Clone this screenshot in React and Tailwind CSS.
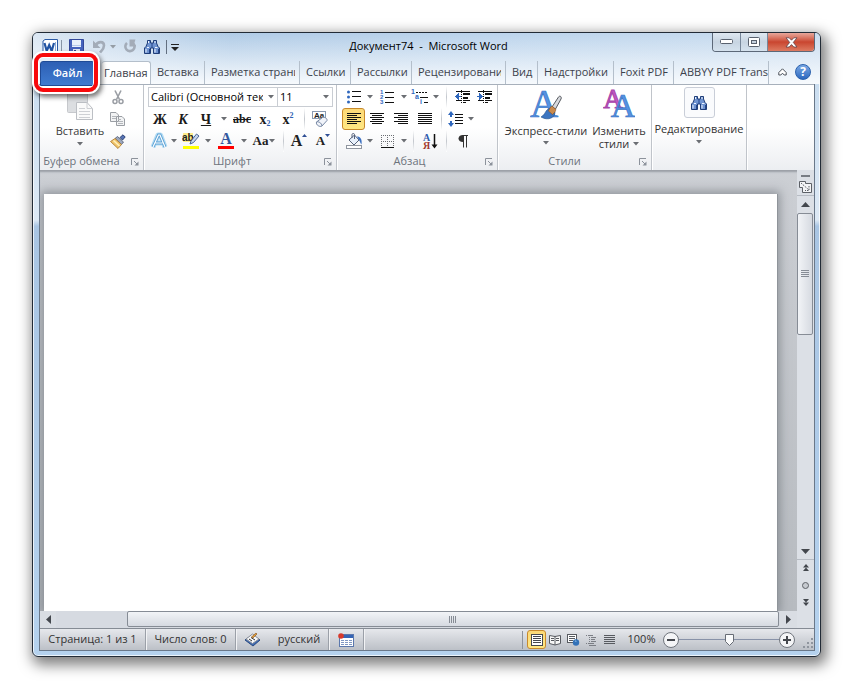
import { useState } from "react"

const tabs = [
  { name: "Главная", width: "w-[49px]" },
  { name: "Вставка", width: "w-[54px] pr-[2px]" },
  { name: "Разметка страни", width: "w-[95px] pr-[4px]" },
  { name: "Ссылки", width: "w-[51px] pr-[2px]" },
  { name: "Рассылки", width: "w-[61px] pr-[2px]" },
  { name: "Рецензировани", width: "w-[94px] pr-[4px]" },
  { name: "Вид", width: "w-[32px] pr-[2px]" },
  { name: "Надстройки", width: "w-[76px] pr-[2px]" },
  { name: "Foxit PDF", width: "w-[60px] pr-[2px]" },
  { name: "ABBYY PDF Trans", width: "w-[95px]" },
]

function Arrow({ className = "" }) {
  return (
    <svg width="6" height="4" viewBox="0 0 6 4" className={`shrink-0 ${className}`}>
      <path d="M0 0H6L3 3.5Z" fill="#6b6e73" />
    </svg>
  )
}

// Small button in the ribbon rows
function Tool({ label, className = "w-6", children }) {
  return (
    <button aria-label={label} className={`flex h-[22px] shrink-0 items-center justify-center ${className}`}>
      {children}
    </button>
  )
}

function Drop({ label }) {
  return (
    <Tool label={label} className="w-2">
      <Arrow />
    </Tool>
  )
}

function Sep({ className = "w-2" }) {
  return (
    <span className={`flex h-[22px] shrink-0 justify-center ${className}`}>
      <span className="w-px bg-linear-to-b from-white via-[#c3c7cd] to-white" />
    </span>
  )
}

function Group({ title, launcher = true, className = "", children }) {
  return (
    <section className={`flex shrink-0 flex-col border-r border-[#c0c4ca] shadow-[1px_0_0_#fff] ${className}`}>
      <div className="flex-1">{children}</div>
      <div className="relative flex h-[17px] items-center justify-center pr-5 text-[11px] text-[#6d737c]">
        {title}
        {launcher && (
          <button aria-label={`${title}: параметры`} className="absolute right-1 bottom-1">
            <svg width="8" height="8" viewBox="0 0 8 8">
              <path d="M.5 7V.5H7M3 3L6 6" fill="none" stroke="#8c929b" />
              <path d="M7.5 3.5V7.5H3.5Z" fill="#8c929b" />
            </svg>
          </button>
        )}
      </div>
    </section>
  )
}

function Binoculars({ size = 16 }) {
  return (
    <svg width={size} height={size} viewBox="0 0 16 16">
      <path d="M3.5 1.5H6.5V4H9.5V1.5H12.5V4L14 7.5L15.5 9V14.5H9.5V9H6.5V14.5H.5V9L2 7.5L3.5 4Z" fill="#6f93d0" stroke="#1f3d78" />
      <path d="M4.5 2V4M11 2V4M3 8.5H5M11 8.5H13.5M2 10V13.5M11 10V13.5" stroke="#eef4ff" />
      <path d="M5.5 10V14M14.5 10V14M8 4V9" stroke="#23458a" />
    </svg>
  )
}

// Horizontal strokes, each one as [x, width]
function Lines({ rows, gap = 2 }) {
  return (
    <svg width="16" height="14" viewBox="0 0 16 14" shapeRendering="crispEdges">
      {rows.map(([x, w], i) => (
        <rect key={i} x={x} y={1 + i * gap} width={w} height="1" fill="#111" />
      ))}
    </svg>
  )
}

const wide = [1, 14]
const alignments = [
  { label: "По левому краю", rows: [wide, [1, 10], wide, [1, 10], wide, [1, 10]] },
  { label: "По центру", rows: [wide, [3, 10], wide, [3, 10], wide, [3, 10]] },
  { label: "По правому краю", rows: [wide, [5, 10], wide, [5, 10], wide, [5, 10]] },
  { label: "По ширине", rows: [wide, wide, wide, wide, wide, wide] },
]

function IndentIcon({ flip }) {
  return (
    <svg width="16" height="16" viewBox="0 0 16 16" shapeRendering="crispEdges">
      <path d="M1 2.5H15M8 4.5H15M8 5.5H15M8 8.5H13M8 9.5H13M1 11.5H6M8 11.5H15M8 13.5H11" stroke="#111" />
      <path d="M6.5 1V15" stroke="#111" strokeDasharray="1 1" />
      <path d={flip ? "M0 7H2V4L6 7.5L2 11V8H0Z" : "M6 7H4V4L0 7.5L4 11V8H6Z"} fill="#2f67bd" />
    </svg>
  )
}

function TitleBar() {
  return (
    <header className="flex h-[27px] items-start">
      <div className="flex h-full flex-1 basis-0 items-center pl-[9px]">
        <svg width="16" height="16" viewBox="0 0 16 16">
          <path d="M1 2L3 .5H15.5V13.5L13.5 15.5H1Z" fill="#fff" stroke="#2b5aa5" />
          <path d="M13.5 3V14" stroke="#8bacd9" />
          <path d="M2.5 4L4.7 12L7.2 6L9.7 12L12 4" fill="none" stroke="#2254a3" strokeWidth="2.2" />
        </svg>
        <span className="ml-[3px] h-[14px] w-px bg-[#8795a6]" />
        <button aria-label="Сохранить" className="ml-[7px]">
          <svg width="15" height="15" viewBox="0 0 15 15">
            <path d="M.5 .5H14.5V14.5H2L.5 13Z" fill="#4563bd" stroke="#33489a" />
            <rect x="3" y="1" width="9" height="7" fill="#e8f1fc" />
            <path d="M3 6.5H12" stroke="#b5c9ea" />
            <rect x="4" y="10" width="7" height="5" fill="#dfe6f2" />
            <rect x="5" y="11" width="2" height="3" fill="#34468d" />
          </svg>
        </button>
        <button aria-label="Отменить" className="ml-[8px]">
          <svg width="14" height="15" viewBox="0 0 14 15">
            <path d="M3.5 6.5C6 2 12 2 12 6.5C12 10 9.5 11.5 8 13.5" fill="none" stroke="#a3acb8" strokeWidth="2.6" />
            <path d="M1 1.5V9H8.5Z" fill="#a3acb8" />
          </svg>
        </button>
        <button aria-label="Отменить: список" className="ml-[4px]"><Arrow className="opacity-60" /></button>
        <button aria-label="Повторить" className="ml-[7px]">
          <svg width="14" height="15" viewBox="0 0 14 15">
            <path d="M10.4 4.5A4.6 4.6 0 1 1 4 4" fill="none" stroke="#a3acb8" strokeWidth="2.6" />
            <path d="M6.5 .5V7.5H13V6.2L11 5.6L12.4 .5Z" fill="#a3acb8" />
          </svg>
        </button>
        <button aria-label="Найти" className="ml-[7px]"><Binoculars /></button>
        <span className="ml-[6px] h-[14px] w-px bg-[#626f80]" />
        <button aria-label="Настройка панели быстрого доступа" className="ml-[4px]">
          <svg width="8" height="8" viewBox="0 0 8 8">
            <path d="M0 1.5H8" stroke="#222" />
            <path d="M0 4H8L4 8Z" fill="#222" />
          </svg>
        </button>
      </div>
      <h1 className="self-center text-[11px] whitespace-pre text-black">Документ74  -  Microsoft Word</h1>
      <div className="flex flex-1 basis-0 justify-end pr-[5px]">
        <div className="flex h-[19px] overflow-hidden rounded-b-[4px] border border-t-0 border-[#5c6878]">
          <button aria-label="Свернуть" className="flex w-7 items-center justify-center border-r border-[#77879a] bg-linear-to-b from-[#dfe8f1] via-[#c8d5e2] to-[#d5e2ee]">
            <svg width="13" height="6" viewBox="0 0 13 6"><rect x=".5" y=".5" width="12" height="4" rx="1" fill="#fff" stroke="#59616e" /></svg>
          </button>
          <button aria-label="Развернуть" className="flex w-[27px] items-center justify-center border-r border-[#77879a] bg-linear-to-b from-[#dfe8f1] via-[#c8d5e2] to-[#d5e2ee]">
            <svg width="12" height="10" viewBox="0 0 12 10">
              <rect x=".5" y=".5" width="11" height="9" rx="1" fill="#fff" stroke="#59616e" />
              <rect x="3.5" y="3.5" width="5" height="3" fill="#c5d1de" stroke="#59616e" />
            </svg>
          </button>
          <button aria-label="Закрыть" className="flex w-[46px] items-center justify-center bg-linear-to-b from-[#e7a79b] via-[#c9452f] to-[#dd7a61]">
            <svg width="13" height="11" viewBox="0 0 13 11">
              <path d="M1 .8H4.2L6.5 3.2L8.8 .8H12L8.3 5.4L12 10H8.8L6.5 7.6L4.2 10H1L4.7 5.4Z" fill="#fff" stroke="#5d4148" strokeWidth=".8" />
            </svg>
          </button>
        </div>
      </div>
    </header>
  )
}

function Tabs({ active, onSelect }) {
  return (
    <nav className="flex h-[24px] items-end pl-[7px]">
      <div className="relative mr-[7px] h-[25px] w-[55px]">
        <button className="h-full w-full rounded-t-[3px] border border-[#1f4b96] bg-linear-to-b from-[#2d5fb4] to-[#3f7bd0] pb-px text-[11px] font-semibold text-white">
          Файл
        </button>
        <span className="pointer-events-none absolute -top-[6px] -left-[6px] z-10 h-[39px] w-[64px] rounded-[9px] border-4 border-[#f8090b] shadow-[0_0_0_2px_#fff,2px_3px_5px_2px_rgba(0,0,0,0.55),inset_0_0_0_1px_#fff]" />
      </div>
      {tabs.map((tab) => (
        <button
          key={tab.name}
          onClick={() => onSelect(tab.name)}
          className={`h-[23px] shrink-0 overflow-hidden border-r border-[#b4bfcb] text-[11px] text-[#3c424b] ${tab.width} ${
            active === tab.name ? "-mb-px h-[24px] rounded-t-[3px] border-t bg-white pl-[2px]" : "pl-[6px]"
          }`}
        >
          <span className="block overflow-hidden text-left whitespace-nowrap">{tab.name}</span>
        </button>
      ))}
      <div className="flex h-full flex-1 items-center justify-end gap-[8px] pr-[9px]">
        <button aria-label="Свернуть ленту">
          <svg width="9" height="8" viewBox="0 0 9 8">
            <path d="M.8 4.5L4.5 .8L8.2 4.5V7H6.2L4.5 5.2L2.8 7H.8Z" fill="#fff" stroke="#4a5059" />
          </svg>
        </button>
        <button aria-label="Справка" className="flex h-4 w-4 items-center justify-center rounded-full border border-[#2b61ad] bg-linear-to-b from-[#7ba9e4] to-[#2c68bf] text-xs leading-none font-bold text-white">?</button>
      </div>
    </nav>
  )
}

function Clipboard() {
  return (
    <Group title="Буфер обмена" className="w-[104px]">
      <div className="flex">
        <button className="flex w-[66px] flex-col items-center pl-[14px] pt-[2px] text-[11px] text-[#3b3b3b]">
          <svg width="32" height="36" viewBox="0 0 32 36">
            <rect x="3.5" y=".5" width="20" height="25" rx="1" fill="#dcdee1" stroke="#c6c8cc" />
            <path d="M12.5 15.5H23L28.5 21.5V32.5H12.5Z" fill="#fafafa" stroke="#bcbfc4" />
            <path d="M23 15.5V21.5H28.5M15 21.5H21M15 24.5H26M15 27.5H26M15 30.5H26" fill="none" stroke="#ced0d4" />
          </svg>
          <span className="h-[16px] leading-[16px]">Вставить</span>
          <Arrow className="mt-[3px]" />
        </button>
        <div className="flex flex-col pt-px">
          <Tool label="Вырезать">
            <svg width="12" height="15" viewBox="0 0 12 15">
              <path d="M3 .5L7.5 9.5M9 .5L4.5 9.5" stroke="#9a9ea4" strokeWidth="1.6" />
              <circle cx="3" cy="11.5" r="2" fill="none" stroke="#9a9ea4" strokeWidth="1.5" />
              <circle cx="9" cy="11.5" r="2" fill="none" stroke="#9a9ea4" strokeWidth="1.5" />
            </svg>
          </Tool>
          <Tool label="Копировать">
            <svg width="16" height="14" viewBox="0 0 16 14">
              <path d="M.5 .5H6L8.5 3V9.5H.5ZM6.5 4.5H12L14.5 7V13.5H6.5Z" fill="#f2f3f4" stroke="#9a9ea4" />
              <path d="M2 4.5H6M2 6.5H6M8 7.5H11M8 9.5H13M8 11.5H13" stroke="#b3b6bb" />
            </svg>
          </Tool>
          <Tool label="Формат по образцу">
            <svg width="16" height="15" viewBox="0 0 16 15">
              <path d="M10 3.5L13 .8L15.2 3L12.5 6Z" fill="#5674b6" stroke="#2e4275" />
              <path d="M7.5 2.5L13.5 8L11.5 10.5L5 4.5Z" fill="#9ba7bd" stroke="#4b5770" strokeWidth=".8" />
              <path d="M5 4.5L11.5 10.5L8 14.5L.5 7.5Z" fill="#f0c56b" stroke="#a8742a" strokeWidth=".8" />
              <path d="M3.5 6.5L9.5 12" stroke="#fff0bd" strokeWidth="1.5" />
            </svg>
          </Tool>
        </div>
      </div>
    </Group>
  )
}

function Combo({ label, width, children }) {
  return (
    <label className={`relative flex h-5 items-center border border-[#c9cdd3] bg-white ${width}`}>
      <select aria-label={label} className="h-full w-full appearance-none overflow-hidden pr-[14px] pl-[2px] text-[11px] text-black outline-none">
        {children}
      </select>
      <Arrow className="pointer-events-none absolute right-[3px]" />
    </label>
  )
}

function FontGroup() {
  return (
    <Group title="Шрифт" className="w-[193px] pl-1">
      <div className="flex pt-[2px] pb-px">
        <Combo label="Шрифт" width="w-[130px]"><option>Calibri (Основной тек</option></Combo>
        <Combo label="Размер шрифта" width="w-[56px] -ml-px"><option>11</option></Combo>
      </div>
      <div className="flex font-['Liberation_Serif',serif] text-[14px] font-bold text-[#1a1a1a]">
        <Tool label="Полужирный">Ж</Tool>
        <Tool label="Курсив" className="w-[22px] italic">К</Tool>
        <Tool label="Подчеркнутый" className="w-6 underline">Ч</Tool>
        <Tool label="Подчеркивание: список" className="w-3"><Arrow /></Tool>
        <Tool label="Зачеркнутый" className="w-6 text-xs line-through">abc</Tool>
        <Tool label="Подстрочный" className="w-[22px]">
          x<span className="self-end text-[8px] text-[#2f62b3]">2</span>
        </Tool>
        <Tool label="Надстрочный">
          x<span className="self-start pt-1 text-[8px] leading-none text-[#2f62b3]">2</span>
        </Tool>
        <Sep />
        <Tool label="Очистить формат">
          <svg width="18" height="17" viewBox="0 0 18 17">
            <rect x="1.5" y=".5" width="13" height="7" fill="#fff" stroke="#8b9bb1" />
            <text x="3" y="7" fontSize="8" fontFamily="Liberation Sans" fontWeight="700" fill="#222">Aa</text>
            <path d="M5.5 11L11.5 6.5C13.5 5.5 16.5 7.5 16 9.5L11 15C9 16.5 4.5 14 5.5 11Z" fill="#f1f4fa" stroke="#7889a5" />
            <path d="M5.5 11C7 10 11 12 11 15" fill="none" stroke="#7889a5" />
          </svg>
        </Tool>
      </div>
      <div className="flex font-['Liberation_Serif',serif] font-bold">
        <Tool label="Текстовые эффекты" className="w-[22px]">
          <svg width="18" height="18" viewBox="0 0 18 18">
            <path d="M3 15L8 3H10.5L15 15M5.5 11H12.5" fill="none" stroke="#b4dcf4" strokeWidth="5" strokeLinejoin="round" />
            <path d="M3 15L8.5 3H10L15 15M5.5 11H12.5" fill="none" stroke="#5ba0d4" strokeWidth="3" />
            <path d="M3 15L8.5 3H10L15 15M5.5 11H12.5" fill="none" stroke="#fff" strokeWidth="1.2" />
          </svg>
        </Tool>
        <Drop label="Текстовые эффекты: список" />
        <Tool label="Цвет выделения" className="w-[26px]">
          <svg width="18" height="18" viewBox="0 0 18 18">
            <rect x="1" y="1" width="10" height="9" fill="#ffec8a" />
            <text x="0" y="9" fontSize="10" fontFamily="Liberation Sans" fontWeight="700" fill="#222">ab</text>
            <path d="M9 9L14.5 2L17 4L11.5 10.5L8 12Z" fill="#c7d6ec" stroke="#4b6595" />
            <rect x="1" y="14" width="16" height="3" fill="#ffff00" />
          </svg>
        </Tool>
        <Drop label="Цвет выделения: список" />
        <Tool label="Цвет текста" className="w-7">
          <svg width="18" height="18" viewBox="0 0 18 18">
            <text x="9" y="12" textAnchor="middle" fontSize="16" fontFamily="Liberation Serif" fontWeight="700" fill="#34589f">A</text>
            <rect x="1" y="14" width="16" height="3" fill="#ff0000" />
          </svg>
        </Tool>
        <Drop label="Цвет текста: список" />
        <Tool label="Регистр" className="w-8 gap-px text-[13px] text-[#222]">Aa<Arrow /></Tool>
        <Sep className="w-[6px]" />
        <Tool label="Увеличить размер" className="w-[26px] text-[16px] text-[#222]">
          A<svg width="5" height="3" viewBox="0 0 5 3" className="mt-1 self-start"><path d="M0 3H5L2.5 0Z" fill="#2f4f95" /></svg>
        </Tool>
        <Tool label="Уменьшить размер" className="w-[22px] text-[13px] text-[#222]">
          A<svg width="5" height="3" viewBox="0 0 5 3" className="mt-1 self-start"><path d="M0 0H5L2.5 3Z" fill="#2f4f95" /></svg>
        </Tool>
      </div>
    </Group>
  )
}

function ParagraphGroup() {
  return (
    <Group title="Абзац" className="w-[161px] pl-[5px]">
      <div className="flex pt-px">
        <Tool label="Маркеры">
          <svg width="16" height="14" viewBox="0 0 16 14">
            <path d="M6 1.5H15M6 6.5H15M6 11.5H15" stroke="#111" />
            <circle cx="2.5" cy="2" r="1.5" fill="#2f67bd" />
            <circle cx="2.5" cy="7" r="1.5" fill="#2f67bd" />
            <circle cx="2.5" cy="12" r="1.5" fill="#2f67bd" />
          </svg>
        </Tool>
        <Drop label="Маркеры: список" />
        <Tool label="Нумерация" className="w-[26px]">
          <svg width="16" height="16" viewBox="0 0 16 16">
            <path d="M6 3.5H15M6 8.5H15M6 13.5H15" stroke="#111" />
            <g fontSize="6" fontFamily="Liberation Sans" fontWeight="700" fill="#2f67bd">
              <text x="1" y="5">1</text>
              <text x="1" y="10">2</text>
              <text x="1" y="15">3</text>
            </g>
          </svg>
        </Tool>
        <Drop label="Нумерация: список" />
        <Tool label="Многоуровневый список">
          <svg width="18" height="16" viewBox="0 0 18 16">
            <path d="M5 3.5H17" stroke="#111" strokeDasharray="2 1" />
            <path d="M9 8.5H17M13 13.5H17" stroke="#111" />
            <g fontSize="7" fontFamily="Liberation Sans" fontWeight="700" fill="#2f67bd">
              <text x="0" y="5">1</text>
              <text x="4" y="10">a</text>
              <text x="9" y="15">i</text>
            </g>
          </svg>
        </Tool>
        <Drop label="Многоуровневый список: список" />
        <Sep className="w-3" />
        <Tool label="Уменьшить отступ" className="w-[22px]"><IndentIcon /></Tool>
        <Tool label="Увеличить отступ" className="w-[22px]"><IndentIcon flip /></Tool>
      </div>
      <div className="flex">
        {alignments.map((a, i) => (
          <Tool
            key={a.label}
            label={a.label}
            className={i === 0 ? "w-[23px] rounded-[3px] border border-[#c98a2c] bg-linear-to-b from-[#fcd977] to-[#ffe783]" : "w-6"}
          >
            <Lines rows={a.rows} />
          </Tool>
        ))}
        <Sep />
        <Tool label="Интервал" className="w-[22px]">
          <svg width="16" height="16" viewBox="0 0 16 16">
            <path d="M7 3.5H15M7 6.5H15M7 9.5H15M7 12.5H15" stroke="#111" />
            <path d="M3 0L6 4H4V6H2V4H0ZM3 16L0 12H2V10H4V12H6Z" fill="#2f67bd" />
          </svg>
        </Tool>
        <Drop label="Интервал: список" />
      </div>
      <div className="flex">
        <Tool label="Заливка">
          <svg width="17" height="17" viewBox="0 0 17 17">
            <path d="M3 7L8.5 2L13 7L8 12Z" fill="#e9f1fb" stroke="#55627b" />
            <path d="M6 5V1.5C6 .2 8.5 .2 8.5 1.5V6" fill="none" stroke="#55627b" />
            <path d="M11 3.5C14 3.5 16.5 6 15.5 11.5C14 10 14 8 13 7Z" fill="#3c70c0" />
            <rect x=".5" y="12.5" width="15" height="3" fill="#fff" stroke="#9096a0" />
          </svg>
        </Tool>
        <Drop label="Заливка: список" />
        <Tool label="Границы" className="w-[26px]">
          <svg width="15" height="15" viewBox="0 0 15 15" shapeRendering="crispEdges">
            <path d="M1 1.5H14M1 7.5H14M1.5 1V13M7.5 1V13M13.5 1V13" stroke="#6b6e73" strokeDasharray="1 1" />
            <path d="M1 13.5H14" stroke="#111" />
          </svg>
        </Tool>
        <Drop label="Границы: список" />
        <Sep className="w-[10px]" />
        <Tool label="Сортировка">
          <svg width="16" height="17" viewBox="0 0 16 17">
            <g fontSize="10" fontFamily="Liberation Serif" fontWeight="700">
              <text x="1" y="8" fill="#2f5cae">А</text>
              <text x="1" y="16" fill="#a33a30">Я</text>
            </g>
            <path d="M12.5 1V14" stroke="#111" strokeWidth="1.5" />
            <path d="M9.5 11.5H15.5L12.5 15.5Z" fill="#111" />
          </svg>
        </Tool>
        <Sep />
        <Tool label="Знаки абзаца" className="w-[26px]">
          <svg width="10" height="13" viewBox="0 0 10 13">
            <path d="M4.5 .5H10M5.5 .5V12.5M8.5 .5V12.5" stroke="#333" fill="none" />
            <path d="M5 0V7C-1 7-1 0 5 0Z" fill="#333" />
          </svg>
        </Tool>
      </div>
    </Group>
  )
}

function StylesGroup() {
  return (
    <Group title="Стили" className="w-[154px]">
      <div className="flex pt-[3px] text-[11px] leading-[13px] text-[#333]">
        <button className="flex w-[96px] flex-col items-center whitespace-nowrap">
          <svg width="32" height="34" viewBox="0 0 32 34">
            <text x="14" y="29" textAnchor="middle" fontSize="39" fontFamily="Liberation Serif" fill="#5592e2" stroke="#3a74c4" strokeWidth=".7">A</text>
            <path d="M22 19L28.5 9C30 7 32 9 31 11L25.5 21Z" fill="#d8dade" stroke="#55585e" />
            <path d="M19.5 20.5C15 22 16 26 11 29C18 33 25 30 25 24Z" fill="#3c75c0" stroke="#24508c" strokeWidth=".6" />
            <path d="M20.5 19L22 18L26 21.5L25 24L22.5 26.5L18.5 23Z" fill="#c98a4c" stroke="#7a4519" strokeWidth=".5" />
          </svg>
          <span className="mt-[2px]">Экспресс-стили</span>
          <Arrow className="mt-1" />
        </button>
        <button className="flex w-[50px] flex-col items-center whitespace-nowrap">
          <svg width="32" height="34" viewBox="0 0 32 34">
            <text x="10" y="20" textAnchor="middle" fontSize="27" fontFamily="Liberation Serif" fill="#c259c4" stroke="#a845ab" strokeWidth="1">A</text>
            <text x="20" y="29" textAnchor="middle" fontSize="34" fontFamily="Liberation Serif" fill="#5592e2" stroke="#3a74c4" strokeWidth=".7">A</text>
          </svg>
          <span className="mt-[2px]">Изменить</span>
          <span className="flex items-center gap-1">стили <Arrow /></span>
        </button>
      </div>
    </Group>
  )
}

function Ribbon() {
  return (
    <div className="flex h-[86px] shrink-0 overflow-hidden border-t border-[#a7b0bb] bg-linear-to-b from-white from-50% to-[#eceef1]">
      <Clipboard />
      <FontGroup />
      <ParagraphGroup />
      <StylesGroup />
      <Group title="" launcher={false} className="w-[95px]">
        <button className="flex w-full flex-col items-center pt-[2px] text-[11px] text-[#333]">
          <span className="flex h-[31px] w-[31px] items-center justify-center rounded-[3px] border border-[#c9ced8] bg-[#fafbfd]">
            <Binoculars size={16} />
          </span>
          <span className="mt-[3px] leading-[16px]">Редактирование</span>
          <Arrow className="mt-[3px]" />
        </button>
      </Group>
    </div>
  )
}

function VerticalScroll() {
  return (
    <div className="flex w-[17px] shrink-0 flex-col items-center bg-[#dce0e6]">
      <span className="mt-[5px] h-[2px] w-[9px] bg-[#787d84]" />
      <button aria-label="Линейка" className="mt-[3px]">
        <svg width="13" height="13" viewBox="0 0 13 13">
          <path d="M.5 1.5H6.5V3.5H12.5V12.5H3.5V7.5H.5Z" fill="#f3f4f6" stroke="#5d6167" />
          <path d="M2 3L10 10M10 6V10.5H6" fill="none" stroke="#5d6167" strokeDasharray="1.5 1" />
        </svg>
      </button>
      <span className="mt-[2px] h-px w-full bg-[#b7bcc4]" />
      <button aria-label="Вверх" className="flex h-[17px] w-full items-center justify-center">
        <svg width="9" height="5" viewBox="0 0 9 5"><path d="M0 5H9L4.5 0Z" fill="#43474d" /></svg>
      </button>
      <div className="w-full flex-1">
        <div className="flex h-[37%] w-[16px] items-center justify-center rounded-[2px] border border-[#868c95] bg-linear-to-r from-[#f2f4f7] to-[#d6dae1]">
          <svg width="8" height="8" viewBox="0 0 8 8"><path d="M0 .5H8M0 2.5H8M0 4.5H8M0 6.5H8" stroke="#868c95" /></svg>
        </div>
      </div>
      <button aria-label="Вниз" className="flex h-[16px] w-full items-center justify-center">
        <svg width="9" height="5" viewBox="0 0 9 5"><path d="M0 0H9L4.5 5Z" fill="#43474d" /></svg>
      </button>
      <div className="flex h-[69px] w-full flex-col items-center justify-between border-t border-[#b7bcc4] pt-1 pb-[22px]">
        <button aria-label="Предыдущая страница">
          <svg width="6" height="8" viewBox="0 0 6 8"><path d="M0 3.5H6L3 0ZM0 7H6L3 3.5Z" fill="#43474d" /></svg>
        </button>
        <button aria-label="Выбор объекта перехода" className="h-[7px] w-[7px] rounded-full border border-[#5d6167] bg-[#c6cad0]" />
        <button aria-label="Следующая страница">
          <svg width="6" height="8" viewBox="0 0 6 8"><path d="M0 1H6L3 4.5ZM0 4.5H6L3 8Z" fill="#43474d" /></svg>
        </button>
      </div>
    </div>
  )
}

function DocumentArea() {
  return (
    <div className="flex min-h-0 flex-1 bg-linear-to-b from-[#cccfd4] to-[#b6babf] shadow-[inset_0_3px_2px_-1px_#9a9fa6]">
      <div className="flex min-w-0 flex-1 flex-col">
        <div className="flex flex-1 overflow-hidden pt-6 pr-5 pl-1">
          <div role="textbox" aria-label="Документ" className="flex-1 bg-white shadow-[1px_0_0_#8f949a,0_0_9px_3px_rgba(90,96,104,0.5)]" />
        </div>
        <div className="flex h-[17px] items-center bg-[#d9dde3]">
          <button aria-label="Влево" className="flex h-full w-4 items-center justify-center">
            <svg width="5" height="9" viewBox="0 0 5 9"><path d="M5 0V9L0 4.5Z" fill="#43474d" /></svg>
          </button>
          <div className="flex h-full flex-1 justify-end bg-[#d6dae1]">
            <div className="mr-px flex h-[16px] w-[90%] items-center justify-center rounded-[2px] border border-[#868c95] bg-linear-to-b from-[#f2f4f7] to-[#d6dae1]">
              <svg width="8" height="7" viewBox="0 0 8 7"><path d="M.5 0V7M2.5 0V7M4.5 0V7M6.5 0V7" stroke="#868c95" /></svg>
            </div>
          </div>
          <button aria-label="Вправо" className="flex h-full w-[17px] items-center justify-center">
            <svg width="5" height="9" viewBox="0 0 5 9"><path d="M0 0V9L5 4.5Z" fill="#43474d" /></svg>
          </button>
        </div>
      </div>
      <VerticalScroll />
    </div>
  )
}

function StatusItem({ className = "", children }) {
  return (
    <button className={`flex h-full shrink-0 items-center justify-center border-r border-[#9ba0a8] shadow-[1px_0_0_#f2f3f5] ${className}`}>
      {children}
    </button>
  )
}

function ViewIcon({ kind }) {
  return (
    <svg width="14" height="12" viewBox="0 0 14 12">
      {kind === "page" && (
        <>
          <rect x="1.5" y=".5" width="11" height="11" fill="#fff" stroke="#45484e" />
          <path d="M3 2.5H11M3 4.5H11M3 6.5H11M3 8.5H11" stroke="#45484e" />
        </>
      )}
      {kind === "read" && (
        <>
          <path d="M1.5 1.5L7 2.5L12.5 1.5V9.5L7 11L1.5 9.5Z" fill="#f7f7f7" stroke="#575a60" />
          <path d="M7 2V11M3 4.5H6M3 6.5H6M8 4.5H11M8 6.5H11" stroke="#575a60" />
        </>
      )}
      {kind === "web" && (
        <>
          <rect x="1.5" y=".5" width="9" height="8" fill="#fff" stroke="#575a60" />
          <path d="M3 2.5H9M3 4.5H9M3 6.5H7" stroke="#575a60" />
          <circle cx="10" cy="8.5" r="3.2" fill="#3472b8" />
          <path d="M8.5 7L10 6.5L10.5 8Z" fill="#a9d6f2" />
        </>
      )}
      {kind === "outline" && (
        <path d="M2 1.5H3M4 1.5H9M5 3.5H6M7 3.5H12M5 5.5H6M7 5.5H11M5 7.5H6M7 7.5H12M2 9.5H3M4 9.5H10M5 11.5H12" stroke="#7b7e85" />
      )}
      {kind === "draft" && <path d="M2 1.5H13M2 3.5H13M2 5.5H13M2 7.5H13M2 9.5H13" stroke="#575a60" />}
    </svg>
  )
}

const views = [
  { kind: "page", label: "Разметка страницы" },
  { kind: "read", label: "Режим чтения" },
  { kind: "web", label: "Веб-документ" },
  { kind: "outline", label: "Структура" },
  { kind: "draft", label: "Черновик" },
]

function StatusBar() {
  const [zoom, setZoom] = useState(100)

  return (
    <footer className="flex h-[22px] shrink-0 items-center border-t border-[#858b94] bg-linear-to-b from-[#e6e8ec] to-[#bcc0c7] text-[11px] text-[#333]">
      <StatusItem className="w-[106px]">Страница: 1 из 1</StatusItem>
      <StatusItem className="w-[90px]">Число слов: 0</StatusItem>
      <StatusItem className="w-[93px] gap-[17px]">
        <svg width="17" height="15" viewBox="0 0 17 15">
          <path d="M1 8L8 3L16 8L9 14Z" fill="#3f6cb5" stroke="#2b4a80" />
          <path d="M2 7L8.5 2L15 7L8.5 11.5Z" fill="#f7f8fa" stroke="#8a8f98" />
          <path d="M5 7L8 9M7 5.5L11 8" stroke="#333" />
          <path d="M7.5 5L12 1L13 2L9 6Z" fill="#e2a03c" stroke="#7c4a1a" strokeWidth=".6" />
        </svg>
        русский
      </StatusItem>
      <StatusItem className="w-[35px]">
        <svg width="16" height="14" viewBox="0 0 16 14">
          <rect x="1.5" y="1.5" width="14" height="12" fill="#fff" stroke="#5b78ad" />
          <rect x="2" y="2" width="13" height="3" fill="#3564b5" />
          <path d="M3 7.5H14M3 9.5H14M3 11.5H14" stroke="#7f98c4" strokeDasharray="3 1" />
          <circle cx="3" cy="3" r="2.8" fill="#d8392b" />
        </svg>
      </StatusItem>
      <div className="flex flex-1 items-center justify-end">
        <span className="h-[18px] w-px bg-[#8d929b]" />
        <div className="ml-[4px] flex">
          {views.map((view, i) => (
            <button
              key={view.kind}
              aria-label={view.label}
              className={`flex h-[19px] items-center justify-center ${
                i === 0 ? "w-[19px] rounded-[3px] border border-[#c98a2c] bg-linear-to-b from-[#fcd977] to-[#ffe783]" : "w-[18px]"
              }`}
            >
              <ViewIcon kind={view.kind} />
            </button>
          ))}
        </div>
        <button className="ml-[9px] w-[29px] whitespace-nowrap">{zoom}%</button>
        <button aria-label="Уменьшить" onClick={() => setZoom(Math.max(10, zoom - 10))} className="ml-[7px] flex h-4 w-4 items-center justify-center rounded-full border border-[#70757d] bg-[#f4f5f7]">
          <span className="h-[2px] w-2 bg-[#45484e]" />
        </button>
        <div className="relative flex h-4 w-[100px] items-center">
          <svg width="100" height="14" viewBox="0 0 100 14">
            <path d="M0 6.5H100" stroke="#8892a8" />
            <path d="M46.5 1.5H54.5V8.5L50.5 12.5L46.5 8.5Z" fill="#fafbfc" stroke="#676c75" />
          </svg>
          <input
            type="range"
            min="10"
            max="190"
            value={zoom}
            onChange={(e) => setZoom(Number(e.target.value))}
            aria-label="Масштаб"
            className="absolute inset-0 w-full opacity-0"
          />
        </div>
        <button aria-label="Увеличить" onClick={() => setZoom(Math.min(190, zoom + 10))} className="flex h-4 w-4 items-center justify-center rounded-full border border-[#70757d] bg-[#f4f5f7]">
          <svg width="8" height="8" viewBox="0 0 8 8"><path d="M0 4H8M4 0V8" stroke="#45484e" strokeWidth="2" /></svg>
        </button>
        <svg width="11" height="11" viewBox="0 0 11 11" className="ml-2 self-end">
          <path d="M8 0H10V2H8ZM4 4H6V6H4ZM8 4H10V6H8ZM0 8H2V10H0ZM4 8H6V10H4ZM8 8H10V10H8Z" fill="#8f959e" />
        </svg>
      </div>
    </footer>
  )
}

export default function App() {
  const [activeTab, setActiveTab] = useState("Главная")

  return (
    <main className="flex min-h-screen bg-white pt-8 pr-[33px] pb-[33px] pl-8 font-['Open_Sans','Noto_Sans',sans-serif]">
      <div className="flex min-w-0 flex-1 flex-col rounded-md border border-[#222b36] bg-[linear-gradient(#c3d9ee,#dde9f5_30%,#a9c5e3_31%,#b5d2ee)] shadow-[inset_0_0_0_1px_rgba(255,255,255,0.75),3px_5px_14px_3px_rgba(0,0,0,0.5)]">
        <div className="flex-none rounded-t-[5px] bg-[linear-gradient(to_bottom,transparent,#f7fafd),linear-gradient(to_right,#dbe7f3,#b0cbe6_25%,#bcd4ec_60%,#c9dcef)]">
          <TitleBar />
          <Tabs active={activeTab} onSelect={setActiveTab} />
        </div>
        <div className="mr-[5px] mb-[5px] ml-[6px] flex min-h-0 flex-1 flex-col border border-t-0 border-[#6a7889]">
          <Ribbon />
          <DocumentArea />
          <StatusBar />
        </div>
      </div>
    </main>
  )
}
